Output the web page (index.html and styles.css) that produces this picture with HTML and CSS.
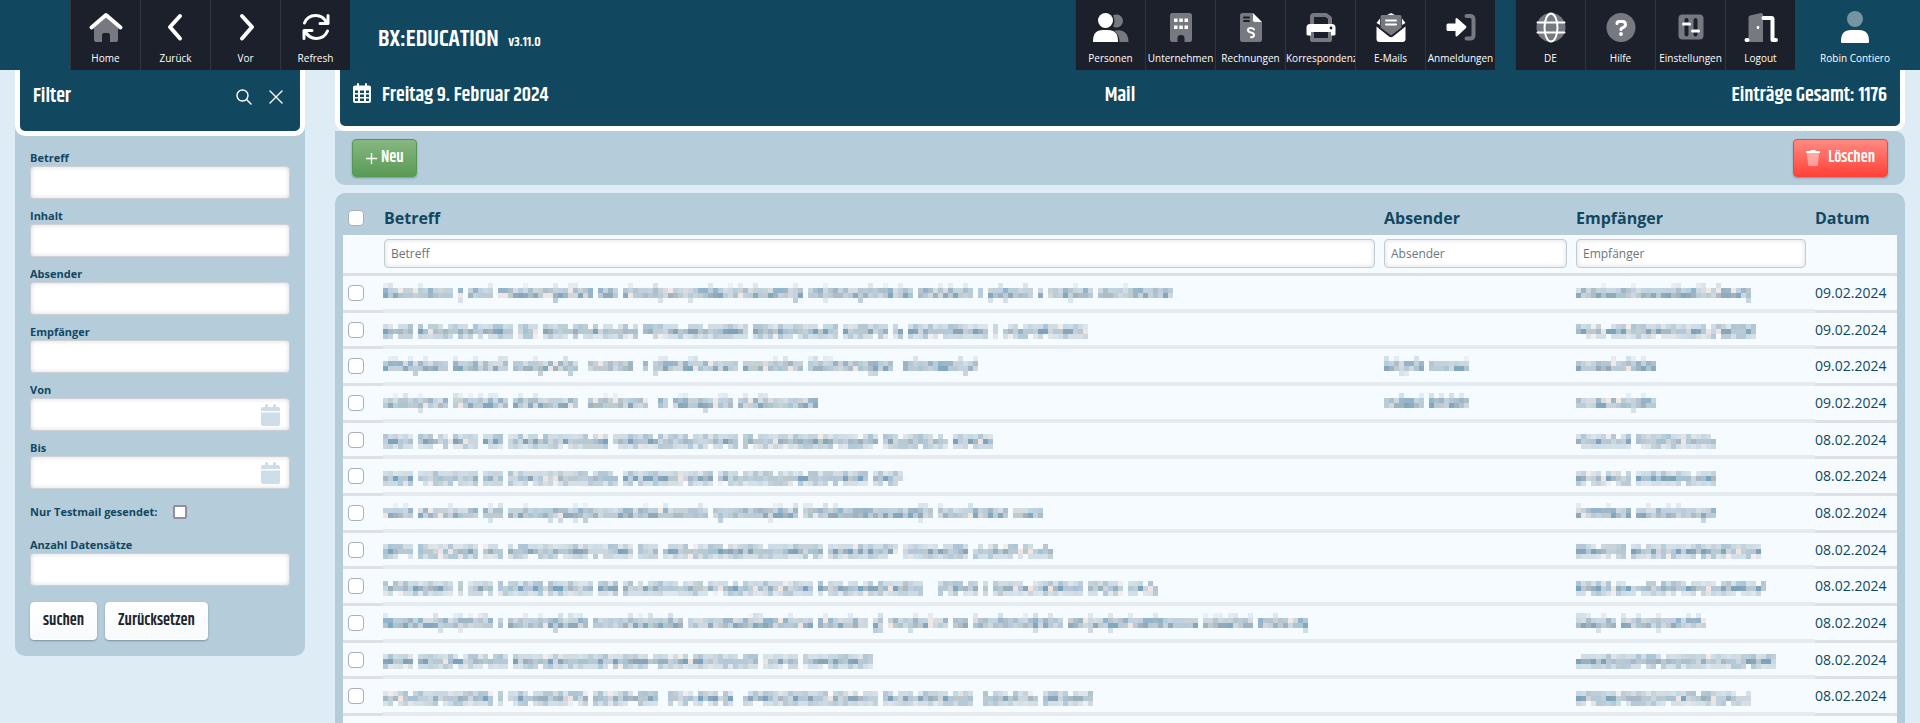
FILE: index.html
```html
<!DOCTYPE html>
<html lang="de">
<head>
<meta charset="utf-8">
<meta name="viewport" content="width=device-width, initial-scale=1">
<title>BX:EDUCATION – Mail</title>
<link rel="stylesheet" href="styles.css">
</head>
<body>
<header class="topbar">
  <nav class="tiles tiles-start" aria-label="Navigation">
    <a class="tile" href="#home">
      <svg class="icon" viewBox="0 0 36 34"><path class="dim" d="M6 17 18 6.500 30 17V29q0 2-2 2H22V24q0-2-2-2H16q-2 0-2 2V31H8q-2 0-2-2z"/><path class="line w4" d="M3.500 16.500 18 4 32.500 16.500"/></svg>
      <span>Home</span></a>
    <a class="tile" href="#back">
      <svg class="icon" viewBox="0 0 36 34"><path class="line w4" d="M22 5 12 16 22 27.500"/></svg>
      <span>Zurück</span></a>
    <a class="tile" href="#forward">
      <svg class="icon" viewBox="0 0 36 34"><path class="line w4" d="M14 5 24 16 14 27.500"/></svg>
      <span>Vor</span></a>
    <a class="tile" href="#refresh">
      <svg class="icon" viewBox="0 0 36 34"><path class="line w3" d="M6.500 12A12 12 0 0 1 28.500 11.500M30 4.500V12.500H22M29.500 20A12 12 0 0 1 7.500 20.500M6 27.500V19.500H14"/></svg>
      <span>Refresh</span></a>
  </nav>
  <div class="brand">BX:EDUCATION <small>v3.11.0</small></div>
  <nav class="tiles" aria-label="Module">
    <a class="tile" href="#personen">
      <svg class="icon" viewBox="0 0 36 34"><path class="dim" d="M20 4.500A6.500 6.500 0 1 1 20 15.500Q23 10 20 4.500zM23 19.500Q35 18 35.500 31H26.500Q26.500 24 21 19.500z"/><circle cx="12.500" cy="9.500" r="7.500"/><path d="M0 30Q0 19 10 19H15Q25 19 25 30V31H0z"/></svg>
      <span>Personen</span></a>
    <a class="tile" href="#unternehmen">
      <svg class="icon" viewBox="0 0 36 34"><path class="dim" d="M9.500 2H26.500Q29 2 29 4.500V28.500Q29 31 26.500 31H21.500V27Q21.500 24 18 24T14.500 27V31H9.500Q7 31 7 28.500V4.500Q7 2 9.500 2z"/><path d="M11 7.500h3.500V11H11zM16.300 7.500h3.500V11h-3.500zM21.500 7.500H25V11h-3.500zM11 14.500h3.500V18H11zM16.300 14.500h3.500V18h-3.500zM21.500 14.500H25V18h-3.500z"/></svg>
      <span>Unternehmen</span></a>
    <a class="tile" href="#rechnungen">
      <svg class="icon" viewBox="0 0 36 34"><path class="dim" d="M9.500 2H20V11H29V28.500Q29 31 26.500 31H9.500Q7 31 7 28.500V4.500Q7 2 9.500 2z"/><path d="M20 2 29 11H21.500Q20 11 20 9.500z"/><path class="cut" d="M11 6.500H16M11 10H16"/><path class="line w2" d="M21 18.500Q20 17 18 17 15 17 15 19.200C15 22.500 21 20.500 21 24 21 26.200 18 26.300 18 26.300 16 26.300 15 25M18 15V28"/></svg>
      <span>Rechnungen</span></a>
    <a class="tile" href="#korrespondenz">
      <svg class="icon" viewBox="0 0 36 34"><path class="dimline w4" d="M9 13V6Q9 4 11 4H23L27 7V13M9 22V29H27V22"/><path d="M7 13H29Q32.500 13 32.500 16.500V23Q32.500 24.500 31 24.500H28V21H8V24.500H5Q3.500 24.500 3.500 23V16.500Q3.500 13 7 13z"/><circle class="hole" cx="28" cy="17" r="1.400"/></svg>
      <span>Korrespondenz</span></a>
    <a class="tile" href="#emails">
      <svg class="icon" viewBox="0 0 36 34"><path d="M14 4 18 2 22 4zM7 7.500V14L3.500 12zM29 7.500V14L32.500 12z"/><path class="dim" d="M9 4H27Q28.500 4 28.500 5.500V16.500L18 24.500 7.500 16.500V5.500Q7.500 4 9 4z"/><path class="line w2" d="M13 9.500H23M13 13.500H23"/><path d="M3.500 15.500 16 25.500Q18 27 20 25.500L32.500 15.500V28Q32.500 31 29.500 31H6.500Q3.500 31 3.500 28z"/></svg>
      <span>E-Mails</span></a>
    <a class="tile" href="#anmeldungen">
      <svg class="icon" viewBox="0 0 36 34"><path class="dimline w4" d="M23.500 5H27Q30.500 5 30.500 8.500V24Q30.500 27.500 27 27.500H23.500"/><path d="M5 12.500H12.500V8.500Q12.500 6 14.500 7.500L23 15Q24 16 23 17L14.500 25Q12.500 26.500 12.500 24V20H5Q3.500 20 3.500 18.500V14Q3.500 12.500 5 12.500z"/></svg>
      <span>Anmeldungen</span></a>
  </nav>
  <nav class="tiles" aria-label="System">
    <a class="tile" href="#sprache">
      <svg class="icon" viewBox="0 0 36 34"><circle class="dim" cx="18" cy="16.500" r="14.500"/><ellipse class="line w2" cx="18" cy="16.500" rx="6.500" ry="14"/><path class="line w2" d="M4.500 11.500H31.500M4.500 21.500H31.500"/></svg>
      <span>DE</span></a>
    <a class="tile" href="#hilfe">
      <svg class="icon" viewBox="0 0 36 34"><circle class="dim" cx="18" cy="16.500" r="14.500"/><path class="line w3" d="M14 12.500Q14 10.500 16 10.500H19.500Q22.500 10.500 22.500 13.500 22.500 15 21 16L18 17.800V18.500"/><circle cx="18" cy="23" r="1.900"/></svg>
      <span>Hilfe</span></a>
    <a class="tile" href="#einstellungen">
      <svg class="icon" viewBox="0 0 36 34"><rect class="dim" x="5.500" y="3.500" width="25" height="25" rx="4"/><path class="groove" d="M13.500 9V23.500M22.500 9V23.500"/><path class="line w3" d="M10.500 13H16.500M19.500 20H25.500"/></svg>
      <span>Einstellungen</span></a>
    <a class="tile" href="#logout">
      <svg class="icon" viewBox="0 0 36 34"><path class="dim" d="M5.500 31V6.500Q5.500 5 7 4.500L18 2Q20 1.800 20 4V31z"/><path class="line w4" d="M3.500 29H4.500M20.500 7H28.500Q29.500 7 29.500 8V29H33"/><ellipse cx="15" cy="16.500" rx="1.300" ry="1.800"/></svg>
      <span>Logout</span></a>
  </nav>
  <a class="user" href="#profil">
    <svg class="icon" viewBox="0 0 36 34"><circle class="soft" cx="18" cy="8" r="8"/><path d="M4 30Q4 19 14 19H22Q32 19 32 30V31Q32 32 31 32H5Q4 32 4 31z"/></svg>
    <span>Robin Contiero</span></a>
</header>

<div class="layout">
  <aside class="filter">
    <div class="filter-head">
      <h2>Filter</h2>
      <button class="plain" type="button" aria-label="Suchen"><svg class="small" viewBox="0 0 16 16"><circle cx="6.500" cy="6.500" r="5.500"/><path d="M10.500 10.500 15 15"/></svg></button>
      <button class="plain" type="button" aria-label="Schliessen"><svg class="small" viewBox="0 0 16 16"><path d="M2 2 14 14M14 2 2 14"/></svg></button>
    </div>
    <form class="filter-form">
      <div class="field"><label for="f-betreff">Betreff</label><input id="f-betreff" type="text"></div>
      <div class="field"><label for="f-inhalt">Inhalt</label><input id="f-inhalt" type="text"></div>
      <div class="field"><label for="f-absender">Absender</label><input id="f-absender" type="text"></div>
      <div class="field"><label for="f-empf">Empfänger</label><input id="f-empf" type="text"></div>
      <div class="field date"><label for="f-von">Von</label><input id="f-von" type="text">
        <svg class="cal" viewBox="0 0 20 22"><path d="M0 7V5Q0 3 2 3H4V1.500a1.500 1.500 0 0 1 3 0V3H12V1.500a1.500 1.500 0 0 1 3 0V3H17Q19 3 19 5V7zM0 8.500H19V20Q19 22 17 22H2Q0 22 0 20z"/></svg></div>
      <div class="field date"><label for="f-bis">Bis</label><input id="f-bis" type="text">
        <svg class="cal" viewBox="0 0 20 22"><path d="M0 7V5Q0 3 2 3H4V1.500a1.500 1.500 0 0 1 3 0V3H12V1.500a1.500 1.500 0 0 1 3 0V3H17Q19 3 19 5V7zM0 8.500H19V20Q19 22 17 22H2Q0 22 0 20z"/></svg></div>
      <div class="tick"><label for="f-test">Nur Testmail gesendet:</label><input id="f-test" type="checkbox"></div>
      <div class="field"><label for="f-anzahl">Anzahl Datensätze</label><input id="f-anzahl" type="text"></div>
      <div class="actions"><button class="btn" type="button">suchen</button><button class="btn" type="button">Zurücksetzen</button></div>
    </form>
  </aside>

  <main class="content">
    <div class="content-head">
      <div class="today"><svg class="month" viewBox="0 0 18 20"><path fill-rule="evenodd" d="M2 2.500H4V1a1 1 0 0 1 2 0V2.500H12V1a1 1 0 0 1 2 0V2.500H16Q18 2.500 18 4.500V18Q18 20 16 20H2Q0 20 0 18V4.500Q0 2.500 2 2.500zM2 7.500V10H5V7.500zM7 7.500V10H11V7.500zM13 7.500V10H16V7.500zM2 11.500V14H5V11.500zM7 11.500V14H11V11.500zM13 11.500V14H16V11.500zM2 15.500V18H5V15.500zM7 15.500V18H11V15.500zM13 15.500V18H16V15.500z"/></svg>Freitag 9. Februar 2024</div>
      <h1>Mail</h1>
      <div class="total">Einträge Gesamt: 1176</div>
    </div>
    <div class="toolbar">
      <button class="btn green" type="button"><svg class="plus" viewBox="0 0 14 14"><path d="M7 1V13M1 7H13"/></svg>Neu</button>
      <button class="btn red" type="button"><svg class="trash" viewBox="0 0 14 16"><path d="M0 1H4L5 0H9L10 1H14V3H0z"/><path class="soft" d="M1 3H13L12 14.500Q12 16 10.500 16H3.500Q2 16 2 14.500z"/></svg>Löschen</button>
    </div>
    <section class="panel">
      <table class="mails">
        <colgroup><col class="c-check"><col><col class="c-from"><col class="c-to"><col class="c-date"></colgroup>
        <thead>
          <tr><th><input type="checkbox" aria-label="Alle auswählen"></th><th>Betreff</th><th>Absender</th><th>Empfänger</th><th>Datum</th></tr>
          <tr class="search"><td></td>
            <td><input type="text" placeholder="Betreff" aria-label="Betreff suchen"></td>
            <td><input type="text" placeholder="Absender" aria-label="Absender suchen"></td>
            <td><input type="text" placeholder="Empfänger" aria-label="Empfänger suchen"></td><td></td></tr>
        </thead>
        <tbody id="rows"></tbody>
      </table>
    </section>
  </main>
</div>
<script src="mosaic.js"></script>
</body>
</html>
```
FILE: styles.css
```css
:root {
  --navy: #124760;
  --tile: #1b202b;
  --panel: #b5cddb;
  --page: #deecf5;
  --row: #f6fbff;
  --head-font: "Khand", "Roboto Condensed", "Open Sans Condensed", "Liberation Sans Narrow", "Liberation Sans", sans-serif;
}
* { box-sizing: border-box; }
body {
  margin: 0;
  height: 100vh;
  overflow: hidden;
  background: var(--page);
  color: var(--navy);
  font: 14px/20px "Open Sans", "Noto Sans", sans-serif;
}
h1, h2 { margin: 0; font-size: inherit; font-weight: inherit; }
button, input { font: inherit; }

.topbar { display: flex; height: 70px; padding-left: 70px; background: var(--navy); color: #fff; }
.tiles { display: flex; margin-right: 20px; }
.tiles + .user { margin-left: -20px; }
.tile, .user {
  display: flex;
  flex-direction: column;
  align-items: center;
  gap: 5px;
  padding-top: 11px;
  color: #fff;
  font-size: 10px;
  line-height: 16px;
  text-decoration: none;
  white-space: nowrap;
}
.tile { width: 70px; overflow: hidden; background: var(--tile); border-left: 1px solid #30353f; }
.tile span { max-width: 100%; }
.user { width: 125px; padding-right: 5px; }
.icon { width: 36px; height: 34px; flex: none; overflow: visible; fill: #fff; }
.dim { fill: #767a80; }
.soft { fill: #fff; opacity: .42; }
.hole { fill: var(--tile); }
.line, .dimline, .cut, .groove { fill: none; stroke: #fff; stroke-linecap: round; stroke-linejoin: round; }
.dimline { stroke: #767a80; }
.cut { stroke: var(--tile); stroke-width: 2; }
.groove { stroke: var(--tile); stroke-width: 4; }
.w2 { stroke-width: 2; }
.w3 { stroke-width: 3; }
.w4 { stroke-width: 4; }

.brand { flex: 1; padding: 25px 0 0 8px; font: 600 24px/28px var(--head-font); }
.brand small { margin-left: 5px; font-size: 14px; }

.layout { display: flex; gap: 30px; padding: 0 15px; align-items: flex-start; }
.filter { width: 290px; flex: none; background: var(--panel); border-radius: 0 0 10px 10px; }
.filter-head {
  display: flex;
  align-items: center;
  gap: 16px;
  height: 66px;
  padding: 0 16px 8px 13px;
  background: var(--navy);
  border: 5px solid #fff;
  border-top: 0;
  border-radius: 0 0 10px 10px;
  color: #fff;
  font: 600 20px/26px var(--head-font);
}
.filter-head h2 { flex: 1; }
.plain { display: flex; padding: 0; border: 0; background: none; }
.small { width: 16px; height: 16px; fill: none; stroke: #fff; stroke-width: 1.400; stroke-linecap: round; }

.filter-form { padding: 14px 15px 16px; font-size: 11px; font-weight: 700; line-height: 16px; }
.field { position: relative; margin-bottom: 9px; }
.field label { display: block; }
input[type="text"] {
  display: block;
  width: 100%;
  height: 33px;
  padding: 0 7px;
  border: 1px solid #cdd1d6;
  border-radius: 4px;
  background: #fff;
  box-shadow: inset 0 0 5px #d9dbde;
  outline: 0;
}
.cal { position: absolute; right: 9px; bottom: 5px; width: 20px; height: 22px; fill: #cfdde9; }
.tick { display: flex; align-items: center; gap: 16px; margin: 14px 0 16px; line-height: 18px; }
.tick input { width: 14px; height: 14px; margin: 0; appearance: none; background: #fff; border: 2px solid #8f8f9d; border-radius: 2px; }
.actions { display: flex; gap: 8px; padding-top: 7px; }

.btn {
  display: inline-flex;
  align-items: center;
  justify-content: center;
  gap: 3px;
  height: 38px;
  padding: 0 12px;
  border: 1px solid #fff;
  border-radius: 4px;
  background: linear-gradient(#fff, #f8fafc);
  box-shadow: 0 1px 2px rgba(30, 60, 90, .4);
  color: #20242c;
  font: 600 16px/24px var(--head-font);
}
.green { background: linear-gradient(#86b781, #5a9a55); border-color: #559a52; color: #fff; }
.red { gap: 8px; background: linear-gradient(#ff8a82, #ff4238); border-color: #f9423a; color: #fff; }
.plus { width: 13px; height: 13px; stroke: #fff; stroke-width: 1.500; }
.trash { width: 14px; height: 16px; fill: #fff; }

.content { flex: 1; min-width: 0; }
.content-head {
  display: grid;
  grid-template-columns: 1fr auto 1fr;
  height: 61px;
  padding: 13px 13px 0;
  background: var(--navy);
  border: 5px solid #fff;
  border-top: 0;
  border-radius: 0 0 10px 10px;
  color: #fff;
  font: 600 20px/26px var(--head-font);
}
.today { display: flex; gap: 11px; }
.month { width: 18px; height: 20px; fill: #fff; }
.total { text-align: right; }
.toolbar { display: flex; justify-content: space-between; padding: 8px 17px; background: var(--panel); border-radius: 0 10px 10px 10px; }

.panel { margin-top: 8px; padding: 8px 8px 0; background: var(--panel); border-radius: 10px 10px 0 0; }
.mails { width: 100%; table-layout: fixed; border-collapse: separate; border-spacing: 0; background: var(--row); }
.c-check { width: 40px; }
.c-from { width: 192px; }
.c-to { width: 239px; }
.c-date { width: 82px; }
.mails th, .mails td { padding: 0; text-align: left; }
.mails th { height: 34px; background: var(--panel); font-size: 16px; line-height: 20px; }
.mails th:nth-child(2), .search td:nth-child(2) { padding-left: 1px; }
.mails td { height: 37px; border-bottom: 3px solid #dde0e5; }
.mails tbody tr:nth-child(3n+2) td { height: 36px; }
.mails .hidden { border-bottom: 4px solid #e5ebef; }
.mails .search td { height: 41px; padding-right: 9px; padding-bottom: 2px; }
.search input[type="text"] { height: 29px; padding: 0 6px; border-color: #c4ccd3; font-size: 12px; }
.search input::placeholder { color: #6c757d; opacity: 1; }
.mails input[type="checkbox"] { display: block; width: 16px; height: 16px; margin: 0 0 0 5px; appearance: none; background: #fff; border: 1px solid #a9b0b9; border-radius: 4px; }
.mosaic { display: block; }
```
FILE: mosaic.js
```js
// Private fields are shown as a block mosaic: run lengths alternate block / gap, in 5px cells.
const CELL = 5;
const TONES = ['#8aa5b8', '#9ab0bd', '#b5cad5', '#c0d0da', '#7ba3bd', '#a7c3d1', '#cdd6dc', '#a9b8c2', '#b4c6d8', '#bcc8cc'];
const rows = [
  ['09.02.2024', 'a', '14,1,1,1,5,1,19,1,4,1,36,1,21,1,11,1,1,1,9,1,1,1,9,1,15', '', '35'],
  ['09.02.2024', 'b', '6,1,19,1,4,1,19,1,21,1,17,1,9,1,2,1,16,1,1,1,17', '', '36'],
  ['09.02.2024', 'a', '13,1,11,1,13,2,9,2,1,1,17,1,12,1,17,2,15', '8,1,8', '16'],
  ['09.02.2024', 'a', '13,1,11,1,13,2,12,2,2,1,12,1,16', '8,1,8', '16'],
  ['08.02.2024', 'b', '6,1,12,1,4,1,20,1,25,1,27,1,13,1,8', '', '11,1,16'],
  ['08.02.2024', 'b', '6,1,12,1,4,1,22,1,18,1,30,1,6', '', '11,1,16'],
  ['08.02.2024', 'a', '6,1,12,1,4,1,40,1,17,1,26,1,14,1,6', '', '11,1,16'],
  ['08.02.2024', 'b', '6,1,12,1,4,1,25,1,4,1,32,1,14,1,13,1,16', '', '10,1,26'],
  ['08.02.2024', 'b', '14,1,1,1,5,1,19,1,4,1,38,1,21,3,8,1,1,1,18,1,7,1,6', '', '38'],
  ['08.02.2024', 'a', '22,1,1,1,16,1,18,1,25,1,10,1,2,1,12,1,3,1,18,1,26,1,10,1,10', '', '8,1,17'],
  ['08.02.2024', 'b', '6,1,18,1,49,1,7,1,14', '', '40'],
  ['08.02.2024', 'b', '22,1,1,1,16,1,13,2,13,2,27,1,18,2,11,1,10', '', '35']
];

let seed = 11;
function random() {
  seed = (seed * 16807) % 2147483647;
  return seed / 2147483647;
}

// Bands from top to bottom as [share of cells filled, opacity].
const BANDS = {
  a: [[0.22, 0.3], [1, 0.8], [1, 0.95], [0.06, 0.5]],
  b: [[0, 0], [0.9, 0.6], [1, 1], [0.9, 0.55]]
};

function mosaic(runs, kind) {
  const lengths = runs.split(',').map(Number);
  const canvas = document.createElement('canvas');
  canvas.className = 'mosaic';
  canvas.width = lengths.reduce((a, b) => a + b) * CELL;
  canvas.height = BANDS[kind].length * CELL;
  canvas.setAttribute('role', 'img');
  canvas.setAttribute('aria-label', 'Unkenntlich');
  const pen = canvas.getContext('2d');
  let x = 0;
  lengths.forEach((length, index) => {
    for (let i = 0; i < length; i++, x += CELL) {
      if (index % 2) continue;
      BANDS[kind].forEach(([share, alpha], band) => {
        if (random() > share) return;
        pen.globalAlpha = alpha;
        pen.fillStyle = random() < 0.03 ? '#efe4df' : TONES[Math.floor(random() * TONES.length)];
        pen.fillRect(x, band * CELL, CELL, CELL);
      });
    }
  });
  return canvas;
}

const body = document.getElementById('rows');
rows.forEach(([date, kind, ...fields], index) => {
  const tr = body.insertRow();
  const box = document.createElement('input');
  box.type = 'checkbox';
  box.setAttribute('aria-label', 'Zeile ' + (index + 1));
  tr.insertCell().append(box);
  fields.forEach(runs => {
    const td = tr.insertCell();
    td.className = 'hidden';
    if (runs) td.append(mosaic(runs, kind));
  });
  tr.insertCell().textContent = date;
});
body.insertRow().insertCell().colSpan = 5;
```
